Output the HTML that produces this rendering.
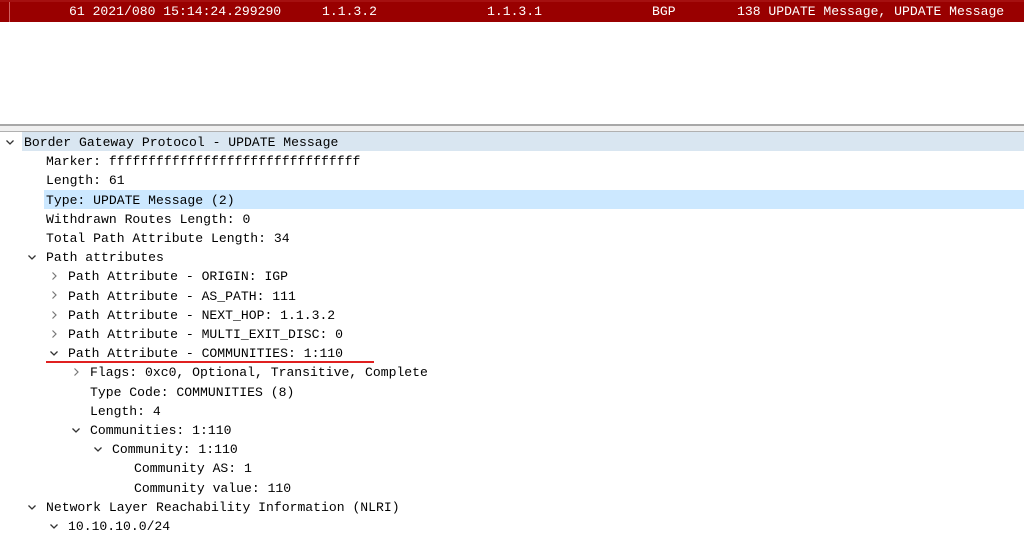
<!DOCTYPE html>
<html><head><meta charset="utf-8"><style>
html,body{margin:0;padding:0;background:#fff;width:1024px;height:536px;overflow:hidden;position:relative;font-family:"Liberation Mono",monospace;font-size:13.1px;color:#000}
.bar{position:absolute;left:0;top:0;width:1024px;height:22px;background:#990000;border-top:2px solid #a51010;box-sizing:border-box;color:#fff}
.bar span{position:absolute;top:2px;line-height:16px;white-space:pre}
.sep1{position:absolute;left:0;top:124px;width:1024px;height:2px;background:#a8a8a8}
.sep2{position:absolute;left:0;top:126px;width:1024px;height:5px;background:#f0f0f0}
.sep3{position:absolute;left:0;top:131px;width:1024px;height:1px;background:#b0b0b0}
.r{position:absolute;height:19.2px;line-height:21px;white-space:pre;right:0}
.hl1{background:#d9e6f1}
.hl2{background:#cce8ff}
svg.c{position:absolute;width:10px;height:10px}
</style></head><body>
<div class="bar">
<div style="position:absolute;left:9px;top:0;width:1px;height:20px;background:#d06060"></div>
<span style="left:69px">61 2021/080 15:14:24.299290</span>
<span style="left:322px">1.1.3.2</span>
<span style="left:487px">1.1.3.1</span>
<span style="left:652px">BGP</span>
<span style="left:737px">138 UPDATE Message, UPDATE Message</span>
</div>
<div class="sep1"></div><div class="sep2"></div><div class="sep3"></div>

<div class="r hl1" style="top:132px;left:22px;padding-left:2px">Border Gateway Protocol - UPDATE Message</div>
<div class="r" style="top:151.2px;left:46px">Marker: ffffffffffffffffffffffffffffffff</div>
<div class="r" style="top:170.4px;left:46px">Length: 61</div>
<div class="r hl2" style="top:189.6px;left:44px;padding-left:2px">Type: UPDATE Message (2)</div>
<div class="r" style="top:208.8px;left:46px">Withdrawn Routes Length: 0</div>
<div class="r" style="top:228px;left:46px">Total Path Attribute Length: 34</div>
<div class="r" style="top:247.2px;left:46px">Path attributes</div>
<div class="r" style="top:266.4px;left:68px">Path Attribute - ORIGIN: IGP</div>
<div class="r" style="top:285.6px;left:68px">Path Attribute - AS_PATH: 111</div>
<div class="r" style="top:304.8px;left:68px">Path Attribute - NEXT_HOP: 1.1.3.2</div>
<div class="r" style="top:324px;left:68px">Path Attribute - MULTI_EXIT_DISC: 0</div>
<div class="r" style="top:343.2px;left:68px">Path Attribute - COMMUNITIES: 1:110</div>
<div style="position:absolute;left:46px;top:361px;width:328px;height:2px;background:#e02020"></div>
<div class="r" style="top:362.4px;left:90px">Flags: 0xc0, Optional, Transitive, Complete</div>
<div class="r" style="top:381.6px;left:90px">Type Code: COMMUNITIES (8)</div>
<div class="r" style="top:400.8px;left:90px">Length: 4</div>
<div class="r" style="top:420px;left:90px">Communities: 1:110</div>
<div class="r" style="top:439.2px;left:112px">Community: 1:110</div>
<div class="r" style="top:458.4px;left:134px">Community AS: 1</div>
<div class="r" style="top:477.6px;left:134px">Community value: 110</div>
<div class="r" style="top:496.8px;left:46px">Network Layer Reachability Information (NLRI)</div>
<div class="r" style="top:516px;left:68px">10.10.10.0/24</div>

<svg class="c" style="left:5px;top:137px" viewBox="0 0 10 10"><path d="M1.5 3.5L5 7L8.5 3.5" fill="none" stroke="#333" stroke-width="1.3"/></svg>
<svg class="c" style="left:27px;top:252px" viewBox="0 0 10 10"><path d="M1.5 3.5L5 7L8.5 3.5" fill="none" stroke="#333" stroke-width="1.3"/></svg>
<svg class="c" style="left:49px;top:348px" viewBox="0 0 10 10"><path d="M1.5 3.5L5 7L8.5 3.5" fill="none" stroke="#333" stroke-width="1.3"/></svg>
<svg class="c" style="left:71px;top:425px" viewBox="0 0 10 10"><path d="M1.5 3.5L5 7L8.5 3.5" fill="none" stroke="#333" stroke-width="1.3"/></svg>
<svg class="c" style="left:93px;top:444px" viewBox="0 0 10 10"><path d="M1.5 3.5L5 7L8.5 3.5" fill="none" stroke="#333" stroke-width="1.3"/></svg>
<svg class="c" style="left:27px;top:502px" viewBox="0 0 10 10"><path d="M1.5 3.5L5 7L8.5 3.5" fill="none" stroke="#333" stroke-width="1.3"/></svg>
<svg class="c" style="left:49px;top:521px" viewBox="0 0 10 10"><path d="M1.5 3.5L5 7L8.5 3.5" fill="none" stroke="#333" stroke-width="1.3"/></svg>
<svg class="c" style="left:49px;top:271px" viewBox="0 0 10 10"><path d="M3.5 1.5L7 5L3.5 8.5" fill="none" stroke="#777" stroke-width="1.2"/></svg>
<svg class="c" style="left:49px;top:290px" viewBox="0 0 10 10"><path d="M3.5 1.5L7 5L3.5 8.5" fill="none" stroke="#777" stroke-width="1.2"/></svg>
<svg class="c" style="left:49px;top:310px" viewBox="0 0 10 10"><path d="M3.5 1.5L7 5L3.5 8.5" fill="none" stroke="#777" stroke-width="1.2"/></svg>
<svg class="c" style="left:49px;top:329px" viewBox="0 0 10 10"><path d="M3.5 1.5L7 5L3.5 8.5" fill="none" stroke="#777" stroke-width="1.2"/></svg>
<svg class="c" style="left:71px;top:367px" viewBox="0 0 10 10"><path d="M3.5 1.5L7 5L3.5 8.5" fill="none" stroke="#777" stroke-width="1.2"/></svg>
</body></html>
